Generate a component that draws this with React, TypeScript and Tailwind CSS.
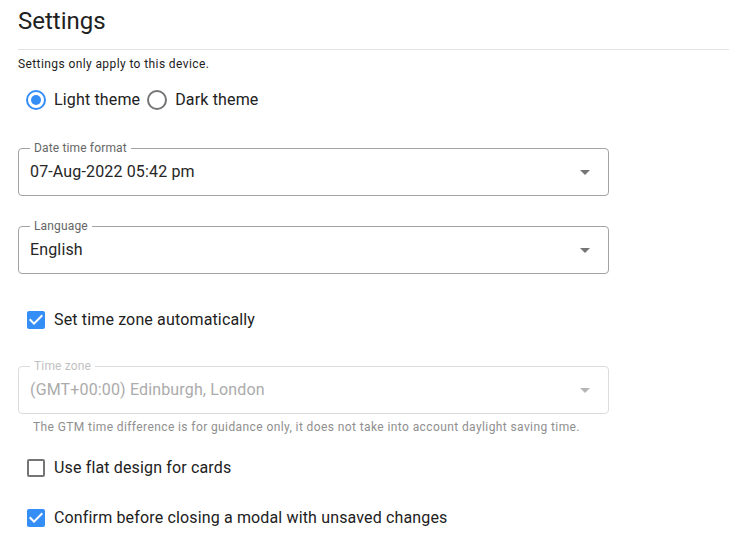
import React from "react";

const BLUE = "#348ef6";

function RadioIcon({ checked }: { checked: boolean }) {
  return (
    <svg width="24" height="24" viewBox="0 0 24 24" className="shrink-0">
      <circle cx="12" cy="12" r="9" fill="none" stroke={checked ? BLUE : "#757575"} strokeWidth="2" />
      {checked && <circle cx="12" cy="12" r="5" fill={BLUE} />}
    </svg>
  );
}

function CheckIcon({ checked }: { checked: boolean }) {
  return checked ? (
    <svg width="24" height="24" viewBox="0 0 24 24" className="shrink-0">
      <path
        fill={BLUE}
        d="M19 3H5c-1.11 0-2 .9-2 2v14c0 1.1.89 2 2 2h14c1.11 0 2-.9 2-2V5c0-1.1-.89-2-2-2zm-9 14l-5-5 1.41-1.41L10 14.17l7.59-7.59L19 8l-9 9z"
      />
    </svg>
  ) : (
    <svg width="24" height="24" viewBox="0 0 24 24" className="shrink-0">
      <path
        fill="#757575"
        d="M19 5v14H5V5h14m0-2H5c-1.1 0-2 .9-2 2v14c0 1.1.9 2 2 2h14c1.1 0 2-.9 2-2V5c0-1.1-.9-2-2-2z"
      />
    </svg>
  );
}

function Arrow({ color }: { color: string }) {
  return (
    <svg width="24" height="24" viewBox="0 0 24 24" className="shrink-0">
      <path d="M7 10l5 5 5-5z" fill={color} />
    </svg>
  );
}

function SelectField({
  label,
  value,
  disabled,
}: {
  label: string;
  value: string;
  disabled?: boolean;
}) {
  return (
    <div
      className={`relative w-[591px] h-[48px] rounded-[4px] border flex items-center pl-[11px] pr-[11px] ${
        disabled ? "border-[#dcdcdc]" : "border-[#a3a3a3]"
      }`}
    >
      <span
        className={`absolute left-[11px] -top-[9px] px-[4px] bg-white text-[12px] leading-[16px] tracking-[0.15px] ${
          disabled ? "text-[#c2c2c2]" : "text-[#666666]"
        }`}
      >
        {label}
      </span>
      <span
        className={`flex-1 text-[16px] leading-[24px] tracking-[0.15px] ${
          disabled ? "text-[#ababab]" : "text-[#262626]"
        }`}
      >
        {value}
      </span>
      <Arrow color={disabled ? "#b5b5b5" : "#757575"} />
    </div>
  );
}

function CheckRow({ checked, label, className }: { checked: boolean; label: string; className?: string }) {
  return (
    <div className={`h-[42px] flex items-center pl-[6px] ${className ?? ""}`}>
      <CheckIcon checked={checked} />
      <span className="ml-[6px] text-[16px] leading-[24px] tracking-[0.15px] text-[#212121]">{label}</span>
    </div>
  );
}

export default function App() {
  return (
    <div
      className="w-[739px] h-[551px] bg-white pl-[18px] pr-[10px] pt-[5px] overflow-hidden"
      style={{ fontFamily: "Roboto, 'Liberation Sans', sans-serif" }}
    >
      <h1 className="text-[24px] leading-[32px] font-normal text-[#212121]">Settings</h1>
      <div className="mt-[12px] h-px bg-[#e3e3e3]" />
      <p className="mt-[6px] text-[12px] leading-[16px] tracking-[0.4px] text-[#212121]">
        Settings only apply to this device.
      </p>

      <div className="mt-[7px] h-[42px] flex items-center pl-[6px]">
        <RadioIcon checked />
        <span className="ml-[6px] text-[16px] leading-[24px] tracking-[0.15px] text-[#212121]">Light theme</span>
        <span className="ml-[5px] flex items-center">
          <RadioIcon checked={false} />
          <span className="ml-[6px] text-[16px] leading-[24px] tracking-[0.15px] text-[#212121]">Dark theme</span>
        </span>
      </div>

      <div className="mt-[27px]">
        <SelectField label="Date time format" value="07-Aug-2022 05:42 pm" />
      </div>
      <div className="mt-[30px]">
        <SelectField label="Language" value="English" />
      </div>

      <CheckRow className="mt-[25px]" checked label="Set time zone automatically" />

      <div className="mt-[25px]">
        <SelectField label="Time zone" value="(GMT+00:00) Edinburgh, London" disabled />
      </div>
      <p className="mt-[5px] ml-[15px] text-[12px] leading-[16px] tracking-[0.4px] text-[#8f8f8f]">
        The GTM time difference is for guidance only, it does not take into account daylight saving time.
      </p>

      <CheckRow className="mt-[12px]" checked={false} label="Use flat design for cards" />
      <CheckRow className="mt-[8px]" checked label="Confirm before closing a modal with unsaved changes" />
    </div>
  );
}
